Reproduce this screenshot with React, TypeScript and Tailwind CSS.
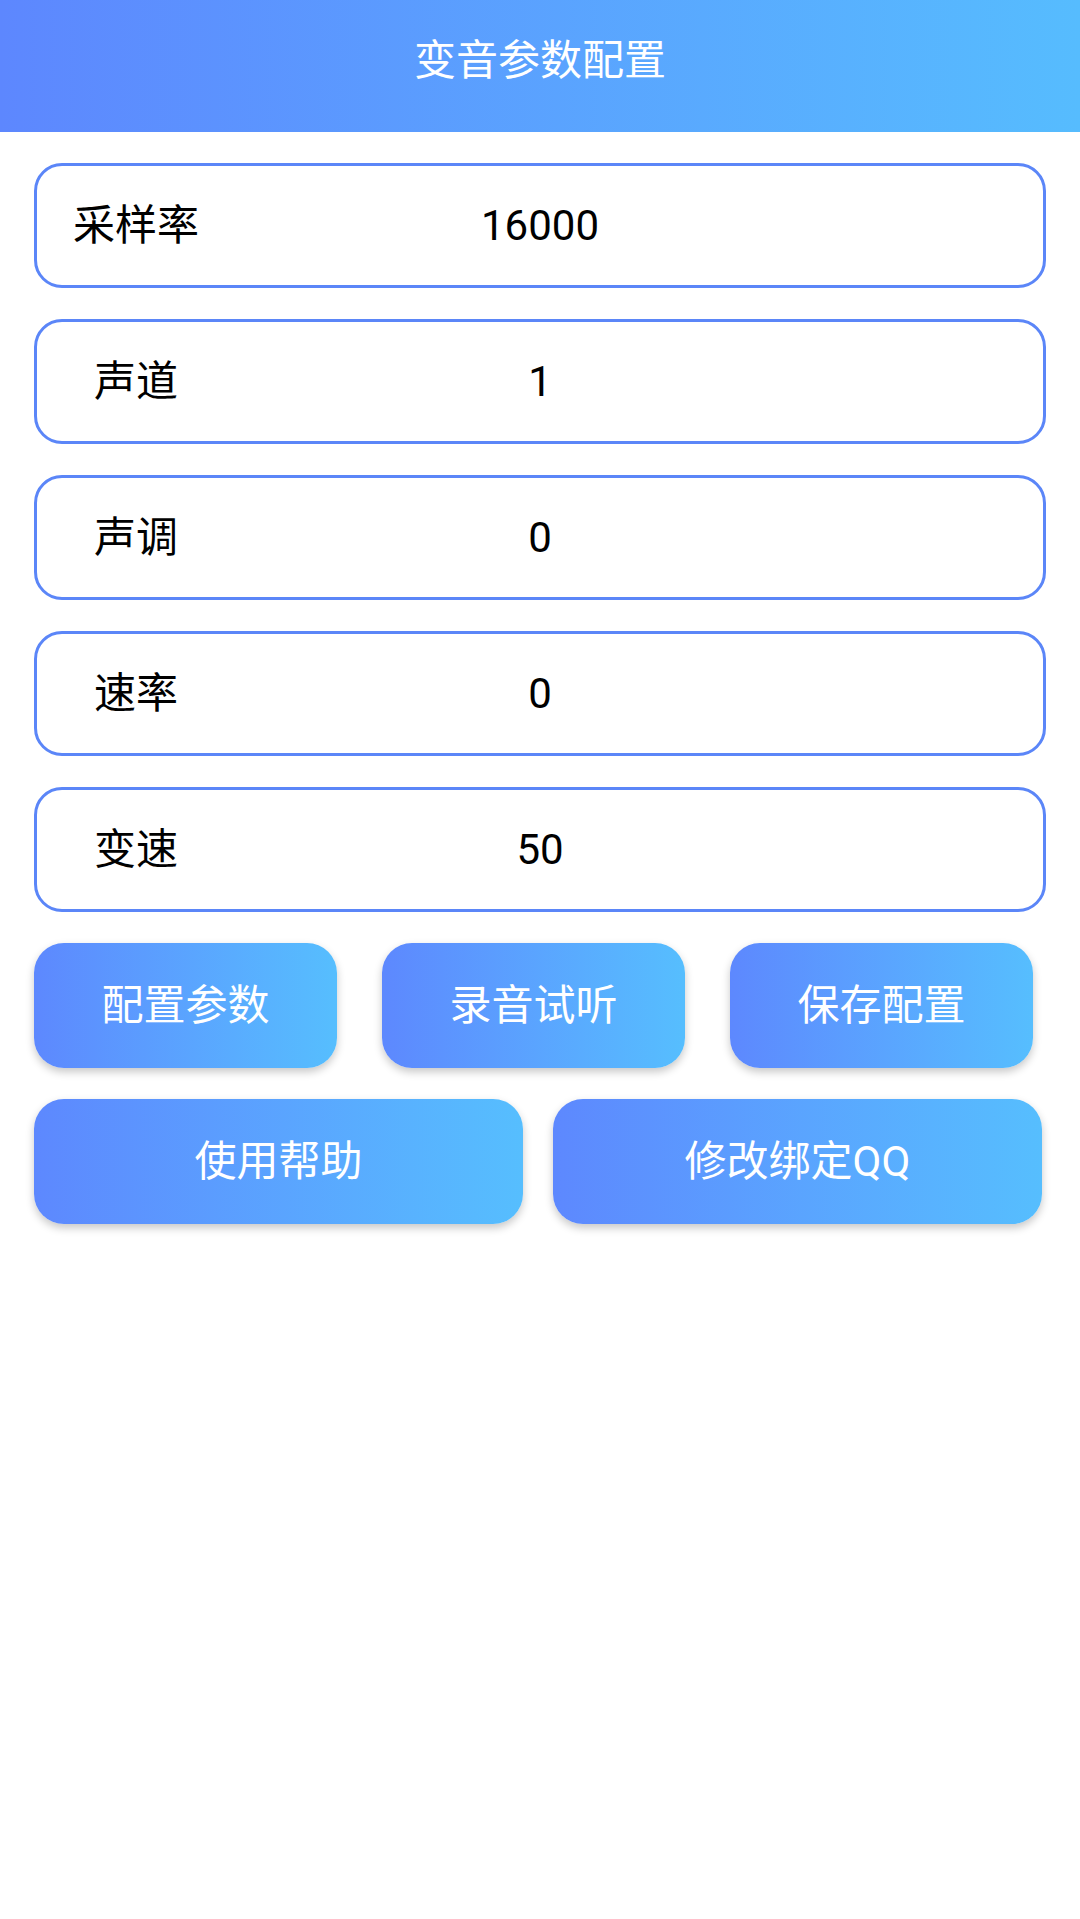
import React from "react";

const FIELDS: Array<{ label: string; value: string }> = [
  { label: "采样率", value: "16000" },
  { label: "声道", value: "1" },
  { label: "声调", value: "0" },
  { label: "速率", value: "0" },
  { label: "变速", value: "50" },
];

const FONT = {
  fontFamily: '"Roboto", "Noto Sans CJK SC", sans-serif',
};

function GradButton({ text, className }: { text: string; className: string }) {
  return (
    <button
      className={`flex h-[125px] items-center justify-center rounded-[30px] bg-gradient-to-r from-[#5d88fe] to-[#56befe] text-[42px] leading-none text-white shadow-[0_4px_8px_rgba(0,0,0,0.22)] ${className}`}
    >
      {text}
    </button>
  );
}

export default function App() {
  return (
    <main className="min-h-[1919px] w-[1080px] bg-white" style={FONT}>
      {/* Title bar */}
      <header className="flex h-[132px] items-center justify-center bg-gradient-to-r from-[#5d87fe] to-[#56bcfe] pb-[10px]">
        <h1 className="text-[42px] font-normal leading-none text-white">
          变音参数配置
        </h1>
      </header>

      {/* Parameter fields */}
      <section className="mt-[31px] flex flex-col gap-[31px] px-[34px]">
        {FIELDS.map((f) => (
          <div
            key={f.label}
            className="grid h-[125px] grid-cols-[198px_1fr_198px] items-center rounded-[28px] border-[3px] border-[#5b86f8] text-[42px] leading-none text-black"
          >
            <span className="text-center">{f.label}</span>
            <span className="text-center">{f.value}</span>
            <span />
          </div>
        ))}
      </section>

      {/* Actions */}
      <section className="mt-[31px] flex gap-[45px] px-[34px]">
        <GradButton text="配置参数" className="w-[303px]" />
        <GradButton text="录音试听" className="w-[303px]" />
        <GradButton text="保存配置" className="w-[303px]" />
      </section>
      <section className="mt-[31px] flex gap-[30px] px-[34px]">
        <GradButton text="使用帮助" className="w-[489px]" />
        <GradButton text="修改绑定QQ" className="w-[489px]" />
      </section>
    </main>
  );
}
